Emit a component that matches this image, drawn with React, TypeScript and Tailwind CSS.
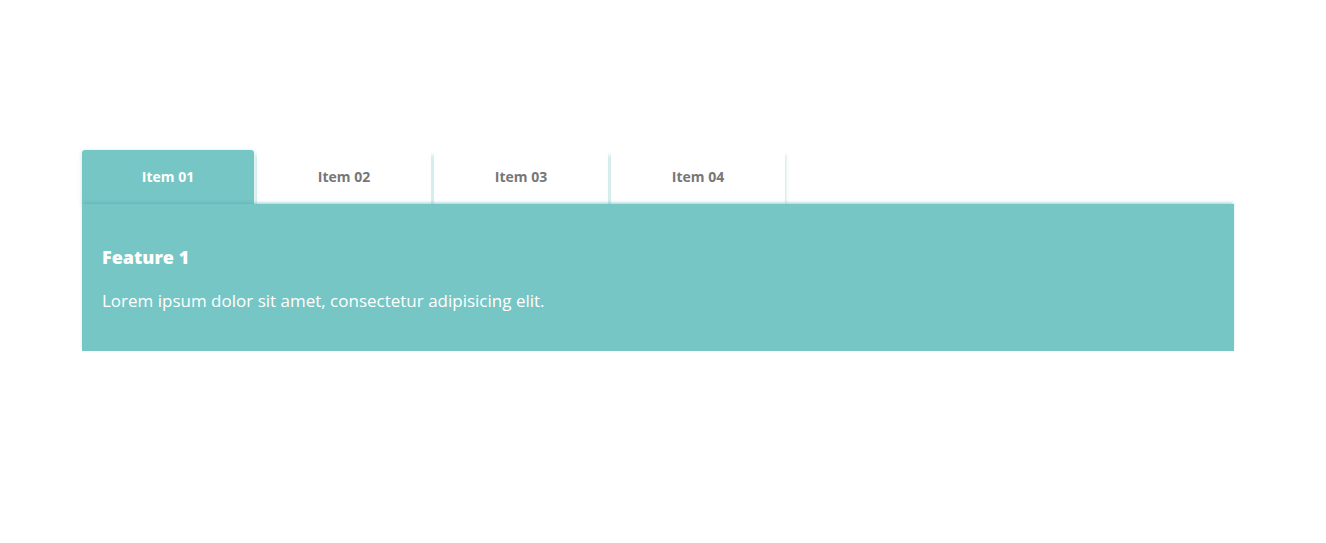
import { useState } from "react";

const tabs = ["Item 01", "Item 02", "Item 03", "Item 04"];

export default function App() {
  const [active, setActive] = useState(0);
  return (
    <div className="min-h-[543px] bg-white pt-[150px] font-['Open_Sans',sans-serif]">
      <div className="ml-[82px] w-[1152px]">
        <div className="flex gap-[3px]">
          {tabs.map((t, i) => (
            <button
              key={t}
              onClick={() => setActive(i)}
              className={
                i === active
                  ? "h-[54px] w-[172px] rounded-t-[3px] bg-[#76c6c5] pb-[2px] text-[14px] font-bold text-white shadow-[0_1px_4px_rgba(80,170,170,0.3)]"
                  : "h-[54px] w-[174px] bg-white pb-[2px] text-[14px] font-bold text-[#777] shadow-[2px_4px_3px_-1px_rgba(118,198,197,0.4),-2px_4px_3px_-1px_rgba(118,198,197,0.4)]"
              }
            >
              {t}
            </button>
          ))}
        </div>
        <div className="relative h-[147px] bg-[#76c6c5] px-5 pt-[41px] text-white shadow-[0_-2px_3px_-1px_rgba(80,170,170,0.6)]">
          <h3 className="text-[18px] font-extrabold leading-6">Feature {active + 1}</h3>
          <p className="mt-5 text-[17px] leading-6">
            Lorem ipsum dolor sit amet, consectetur adipisicing elit.
          </p>
        </div>
      </div>
    </div>
  );
}
